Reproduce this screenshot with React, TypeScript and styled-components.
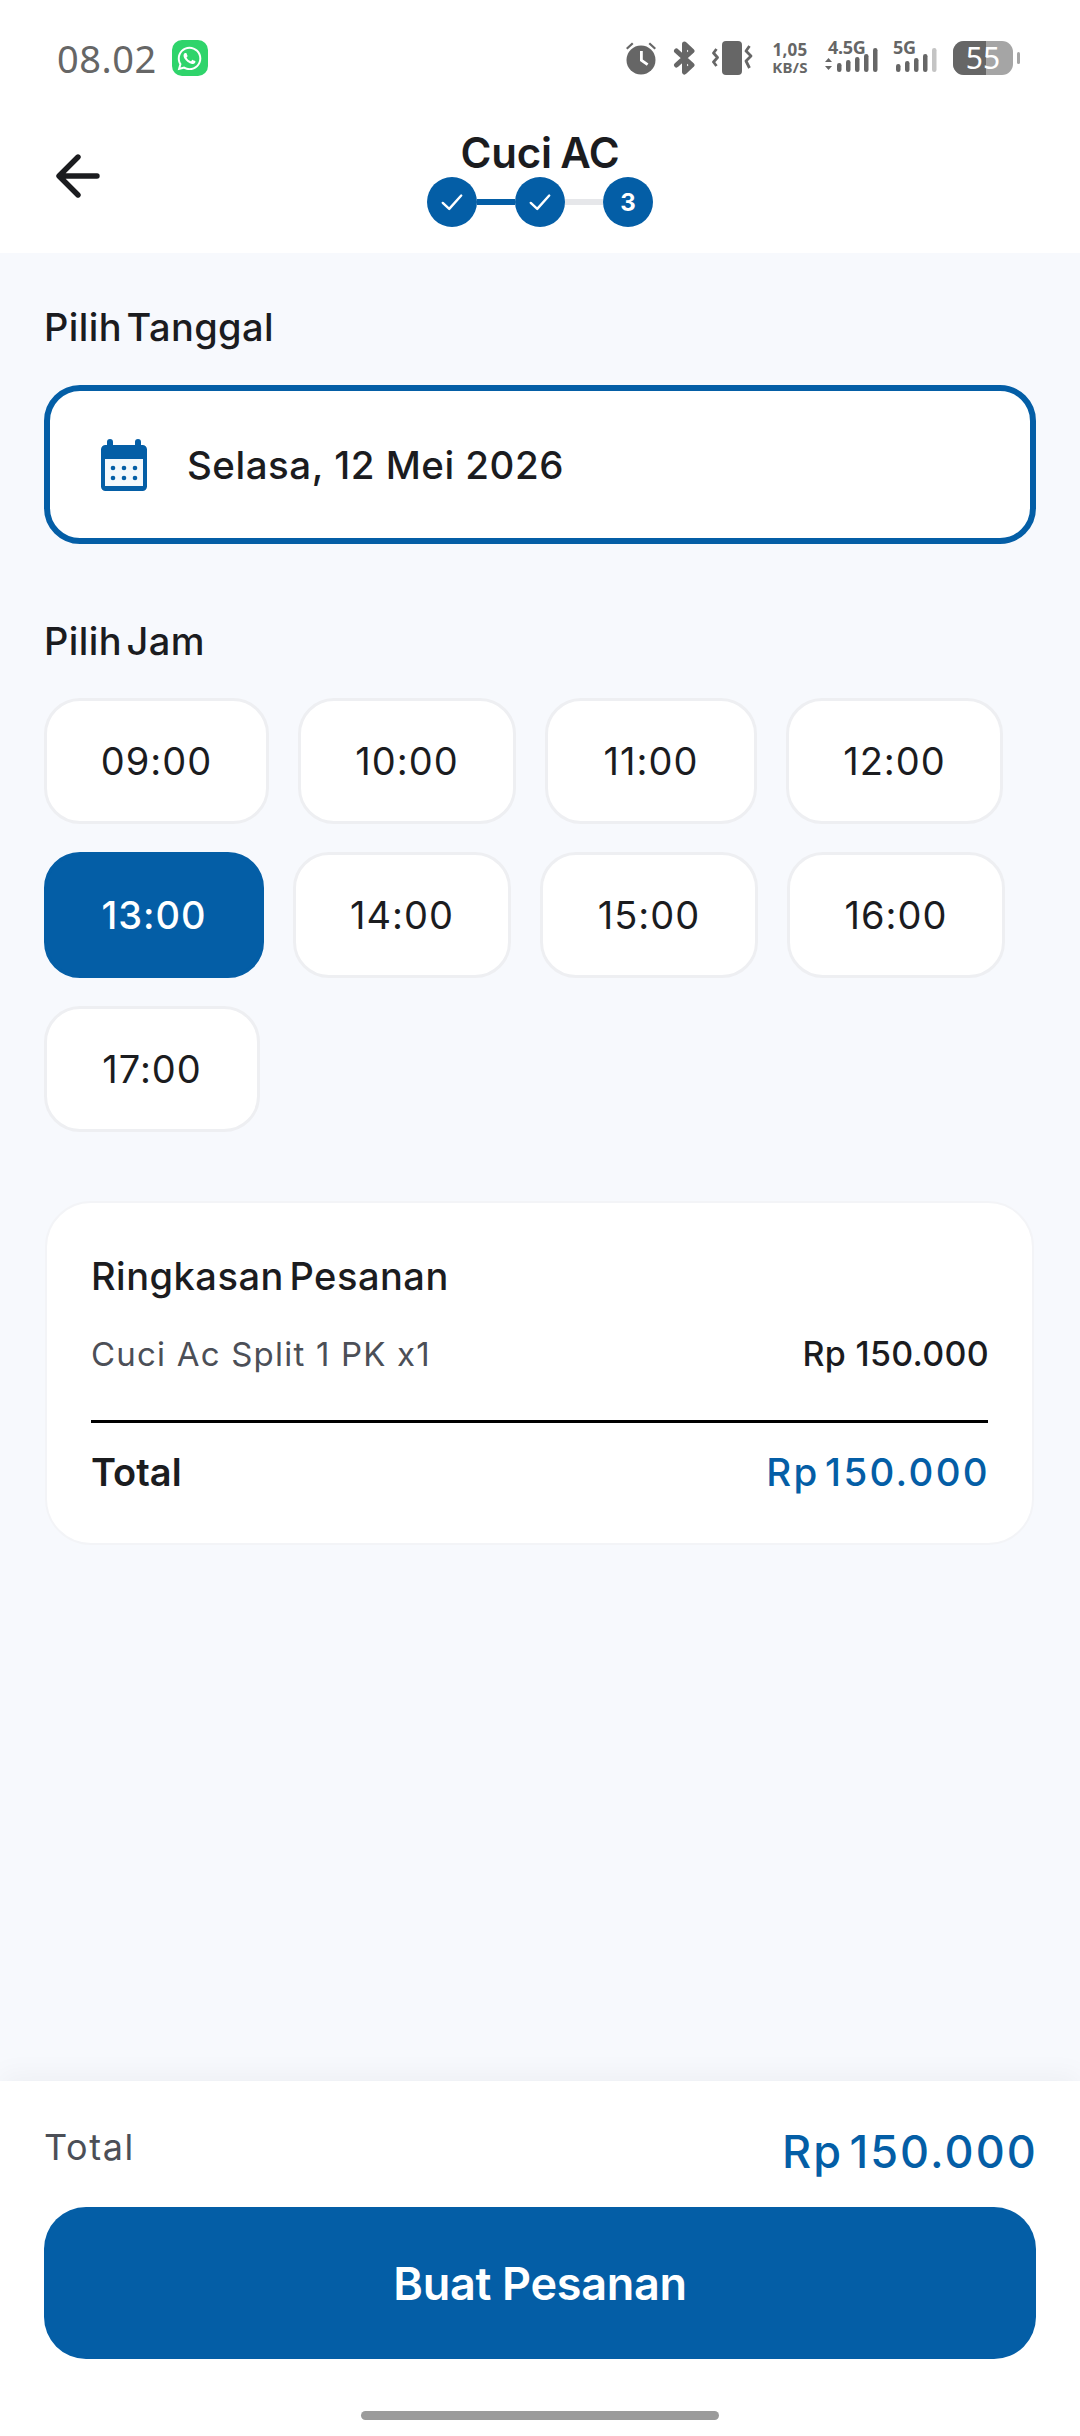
import React from "react";
import styled, { createGlobalStyle } from "styled-components";
import { FaWhatsapp } from "react-icons/fa";

const BLUE = "#045ea6";
const INK = "#1b1c1f";
const GREY = "#666666";

const Global = createGlobalStyle`
  html, body { margin: 0; padding: 0; background: #f7f9fd; }
  * { box-sizing: border-box; }
  body { font-family: Inter, "Noto Sans", sans-serif; color: ${INK}; }
`;

const Page = styled.div`
  width: 1080px;
  height: 2436px;
  display: flex;
  flex-direction: column;
  background: #f7f9fd;
  overflow: hidden;
`;

const StatusBar = styled.div`
  height: 110px;
  padding: 40px 60px 0 57px;
  background: #fff;
  display: flex;
  align-items: flex-start;
  justify-content: space-between;
`;

const StatusLeft = styled.div`
  display: flex;
  align-items: center;
  gap: 15px;
  height: 36px;
`;

const Clock = styled.span`
  font-family: "Noto Sans", sans-serif;
  font-size: 38px;
  line-height: 36px;
  color: ${GREY};
  letter-spacing: 0.5px;
`;

const WaBadge = styled.span`
  width: 36px;
  height: 36px;
  border-radius: 10px;
  background: #2fd46b;
  color: #fff;
  display: flex;
  align-items: center;
  justify-content: center;
`;

const StatusRight = styled.div`
  display: flex;
  align-items: center;
  height: 36px;
`;

const Slot = styled.span<{ $gap: number }>`
  display: flex;
  margin-right: ${(p) => p.$gap}px;
`;

const Speed = styled.span`
  display: flex;
  flex-direction: column;
  align-items: center;
  width: 40px;
  margin-right: 15px;
  font-family: "Noto Sans", sans-serif;
  font-weight: 700;
  color: ${GREY};
  font-size: 15px;
  line-height: 16px;
  letter-spacing: 0.3px;
`;

const SpeedTop = styled.span`
  font-size: 17px;
  line-height: 18px;
`;

const NetBlock = styled.span<{ $w: number; $gap: number }>`
  position: relative;
  display: block;
  width: ${(p) => p.$w}px;
  height: 36px;
  margin-right: ${(p) => p.$gap}px;
`;

const NetLabel = styled.span<{ $left: number }>`
  position: absolute;
  left: ${(p) => p.$left}px;
  top: -2px;
  font-family: "Noto Sans", sans-serif;
  font-weight: 700;
  font-size: 18px;
  line-height: 18px;
  color: ${GREY};
  letter-spacing: -0.3px;
`;

const Battery = styled.span`
  position: relative;
  width: 60px;
  height: 34px;
  border-radius: 11px;
  display: flex;
  background: #a5a5a5;
`;

const BatteryFill = styled.span`
  width: 33px;
  border-radius: 11px 0 0 11px;
  background: #666;
`;

const BatteryText = styled.span`
  position: absolute;
  inset: 0;
  display: flex;
  align-items: center;
  justify-content: center;
  color: #fff;
  font-family: "Noto Sans", sans-serif;
  font-size: 30px;
  line-height: 34px;
`;

const BatteryNub = styled.span`
  width: 3px;
  height: 12px;
  margin-left: 4px;
  border-radius: 2px;
  background: #a5a5a5;
`;

const Header = styled.header`
  height: 143px;
  padding: 19px 56px 26px;
  background: #fff;
  display: grid;
  grid-template-columns: 1fr auto 1fr;
  align-items: center;
`;

const BackButton = styled.span`
  display: flex;
  width: 44px;
  height: 44px;
  margin-bottom: 4px;
`;

const HeaderCenter = styled.div`
  display: flex;
  flex-direction: column;
  align-items: center;
`;

const Title = styled.h1`
  margin: 0;
  font-size: 42px;
  line-height: 48px;
  font-weight: 600;
  letter-spacing: -0.2px;
  word-spacing: -2px;
  color: ${INK};
`;

const Stepper = styled.div`
  display: flex;
  align-items: center;
  height: 50px;
`;

const StepDot = styled.span`
  width: 50px;
  height: 50px;
  border-radius: 50%;
  background: ${BLUE};
  color: #fff;
  font-size: 24px;
  font-weight: 700;
  display: flex;
  align-items: center;
  justify-content: center;
`;

const StepLine = styled.span<{ $done?: boolean }>`
  width: 38px;
  height: 6px;
  background: ${(p) => (p.$done ? BLUE : "#e6e7ea")};
`;

const Main = styled.main`
  flex: 1;
  padding: 50px 44px 0;
  display: flex;
  flex-direction: column;
`;

const Label = styled.h2`
  margin: 0;
  font-size: 38px;
  line-height: 48px;
  font-weight: 500;
  letter-spacing: 0.4px;
  word-spacing: -6px;
  color: ${INK};
`;

const DateField = styled.div`
  margin: 34px 0 73px;
  height: 159px;
  border: 6px solid ${BLUE};
  border-radius: 36px;
  background: #fff;
  padding: 0 51px;
  display: flex;
  align-items: center;
  gap: 40px;
  font-size: 38.5px;
  font-weight: 500;
  letter-spacing: 0.5px;
`;

const Chips = styled.div`
  margin-top: 33px;
  display: flex;
  flex-wrap: wrap;
  column-gap: 29px;
  row-gap: 28px;
`;

const Chip = styled.div<{ $w: number; $active?: boolean }>`
  width: ${(p) => p.$w}px;
  height: 126px;
  border-radius: 36px;
  border: 3px solid ${(p) => (p.$active ? BLUE : "#eeeff2")};
  background: ${(p) => (p.$active ? BLUE : "#fff")};
  color: ${(p) => (p.$active ? "#fff" : INK)};
  font-size: 38px;
  letter-spacing: 1px;
  font-weight: ${(p) => (p.$active ? 500 : 400)};
  display: flex;
  align-items: center;
  justify-content: center;
`;

const SummaryCard = styled.section`
  margin: 69px 2px 0 1px;
  height: 344px;
  padding: 49px 44px 0 44px;
  background: #fff;
  border: 2px solid #f3f4f7;
  border-radius: 46px;
  display: flex;
  flex-direction: column;
`;

const CardTitle = styled.h3`
  margin: 0;
  font-size: 38px;
  line-height: 48px;
  font-weight: 500;
  letter-spacing: 0.5px;
  word-spacing: -5px;
  color: ${INK};
`;

const Row = styled.div`
  display: flex;
  justify-content: space-between;
  align-items: center;
`;

const ItemRow = styled(Row)`
  margin-top: 30px;
  padding-bottom: 42px;
  border-bottom: 3px solid #000;
  line-height: 48px;
`;

const ItemName = styled.span`
  font-size: 33px;
  letter-spacing: 1.2px;
  color: #4c4f57;
`;

const ItemPrice = styled.span`
  font-size: 34px;
  font-weight: 500;
  letter-spacing: 0.3px;
  margin-right: -1px;
  color: ${INK};
`;

const TotalRow = styled(Row)`
  margin-top: 25px;
  line-height: 48px;
`;

const TotalLabel = styled.span`
  font-size: 38px;
  font-weight: 600;
  letter-spacing: 0;
  color: ${INK};
`;

const TotalPrice = styled.span`
  font-size: 38.5px;
  font-weight: 500;
  letter-spacing: 2.3px;
  word-spacing: -7px;
  margin-right: -2px;
  color: ${BLUE};
`;

const BottomBar = styled.footer`
  height: 355px;
  background: #fff;
  box-shadow: 0 -6px 26px rgba(0, 0, 0, 0.045);
  padding: 40px 44px 0;
  display: flex;
  flex-direction: column;
  align-items: stretch;
`;

const BarTotalRow = styled(Row)`
  height: 60px;
`;

const BarLabel = styled.span`
  font-size: 36px;
  letter-spacing: 1.6px;
  color: #4c4f57;
  margin-bottom: 8px;
`;

const BarPrice = styled.span`
  font-size: 45px;
  font-weight: 500;
  letter-spacing: 2.1px;
  word-spacing: -8px;
  margin-right: -2px;
  color: ${BLUE};
`;

const PrimaryButton = styled.button`
  margin-top: 26px;
  height: 152px;
  border: none;
  border-radius: 42px;
  background: ${BLUE};
  color: #fff;
  font-family: Inter, sans-serif;
  font-size: 45px;
  font-weight: 600;
  letter-spacing: -0.3px;
`;

const HomeBar = styled.div`
  width: 358px;
  height: 9px;
  border-radius: 5px;
  background: #9b9b9b;
  margin: 52px auto 0;
`;

const CheckIcon = () => (
  <svg width="24" height="24" viewBox="0 0 26 26" fill="none" stroke="#fff" strokeWidth="2.6" strokeLinecap="round" strokeLinejoin="round">
    <path d="M3 14l7 6.5L23 6" />
  </svg>
);

const ArrowBack = () => (
  <svg width="44" height="44" viewBox="0 0 44 44" fill="none" stroke={INK} strokeWidth="5.4" strokeLinecap="round" strokeLinejoin="round">
    <path d="M41 22H4M22 3L3 22 22 41" />
  </svg>
);

const CalendarIcon = () => (
  <svg width="46" height="52" viewBox="0 0 46 52" fill={BLUE}>
    <path d="M9 0a3 3 0 0 1 3 3v3h22V3a3 3 0 0 1 6 0v3h1.5A4.5 4.5 0 0 1 46 10.5v37a4.5 4.5 0 0 1-4.5 4.5h-37A4.5 4.5 0 0 1 0 47.5v-37A4.5 4.5 0 0 1 4.500 6H6V3a3 3 0 0 1 3-3z" />
    <rect x="4" y="20" width="38" height="27" fill="#f3f8fc" />
    <g>
      <circle cx="12" cy="29" r="2.300" />
      <circle cx="23" cy="29" r="2.300" />
      <circle cx="34" cy="29" r="2.300" />
      <circle cx="12" cy="39" r="2.300" />
      <circle cx="23" cy="39" r="2.300" />
      <circle cx="34" cy="39" r="2.300" />
    </g>
  </svg>
);

const AlarmIcon = () => (
  <svg width="32" height="36" viewBox="0 0 32 36" fill={GREY}>
    <circle cx="16" cy="20" r="14.500" />
    <path d="M15 11h2.800v8.500l5.600 4-1.600 2.200-6.800-4.800z" fill="#fff" />
    <path d="M1 8l6-5.500 1.500 1.600-6 5.500zM31 8l-6-5.500-1.500 1.600 6 5.500z" />
  </svg>
);

const BluetoothIcon = () => (
  <svg width="23" height="34" viewBox="0 0 23 34" fill="none" stroke={GREY} strokeWidth="5" strokeLinejoin="round" strokeLinecap="round">
    <path d="M3.500 10l15.500 14-7.500 7V3L19 10 3.500 24" />
  </svg>
);

const VibrateIcon = () => (
  <svg width="42" height="34" viewBox="0 0 42 34" fill="none" stroke={GREY} strokeWidth="2.800" strokeLinejoin="round">
    <rect x="10" y="0" width="20" height="34" rx="4" fill={GREY} stroke="none" />
    <path d="M4.500 8L1.500 12l4 4.500-4 4.500 3 4" />
    <path d="M37.500 5l-3.500 5 5 5-5 5 3.500 7" />
  </svg>
);

const MobileSignal = () => (
  <svg width="53" height="36" viewBox="0 0 53 36" fill={GREY}>
    <path d="M0 22l3.500-4 3.500 4zM0 26h7l-3.500 4z" />
    <rect x="12" y="23" width="4.500" height="9" rx="2.200" />
    <rect x="21" y="20" width="4.500" height="12" rx="2.200" />
    <rect x="30" y="17" width="4.500" height="15" rx="2.200" />
    <rect x="39" y="14" width="4.500" height="18" rx="2.200" />
    <rect x="48" y="8" width="4.500" height="24" rx="2.200" />
  </svg>
);

const FiveGSignal = () => (
  <svg width="44" height="36" viewBox="0 0 44 36" fill={GREY}>
    <rect x="3" y="24" width="4.500" height="8" rx="2.200" />
    <rect x="12" y="21" width="4.500" height="11" rx="2.200" />
    <rect x="21" y="18" width="4.500" height="14" rx="2.200" />
    <rect x="30" y="14" width="4.500" height="18" rx="2.200" />
    <rect x="39" y="8" width="4.500" height="24" rx="2.200" fill="#c4c4c4" />
  </svg>
);

const slots: { t: string; w: number; active?: boolean }[] = [
  { t: "09:00", w: 225 },
  { t: "10:00", w: 218 },
  { t: "11:00", w: 212 },
  { t: "12:00", w: 217 },
  { t: "13:00", w: 220, active: true },
  { t: "14:00", w: 218 },
  { t: "15:00", w: 218 },
  { t: "16:00", w: 218 },
  { t: "17:00", w: 216 },
];

export default function App() {
  return (
    <Page>
      <Global />
      <StatusBar>
        <StatusLeft>
          <Clock>08.02</Clock>
          <WaBadge>
            <FaWhatsapp size={27} />
          </WaBadge>
        </StatusLeft>
        <StatusRight>
          <Slot $gap={16}><AlarmIcon /></Slot>
          <Slot $gap={16}><BluetoothIcon /></Slot>
          <Slot $gap={16}><VibrateIcon /></Slot>
          <Speed>
            <SpeedTop>1,05</SpeedTop>
            KB/S
          </Speed>
          <NetBlock $w={53} $gap={15}>
            <NetLabel $left={3}>4.5G</NetLabel>
            <MobileSignal />
          </NetBlock>
          <NetBlock $w={44} $gap={16}>
            <NetLabel $left={0}>5G</NetLabel>
            <FiveGSignal />
          </NetBlock>
          <Battery>
            <BatteryFill />
            <BatteryText>55</BatteryText>
          </Battery>
          <BatteryNub />
        </StatusRight>
      </StatusBar>
      <Header>
        <BackButton>
          <ArrowBack />
        </BackButton>
        <HeaderCenter>
          <Title>Cuci AC</Title>
          <Stepper>
            <StepDot><CheckIcon /></StepDot>
            <StepLine $done />
            <StepDot><CheckIcon /></StepDot>
            <StepLine />
            <StepDot>3</StepDot>
          </Stepper>
        </HeaderCenter>
      </Header>
      <Main>
        <Label>Pilih Tanggal</Label>
        <DateField>
          <CalendarIcon />
          Selasa, 12 Mei 2026
        </DateField>
        <Label>Pilih Jam</Label>
        <Chips>
          {slots.map((s) => (
            <Chip key={s.t} $w={s.w} $active={s.active}>{s.t}</Chip>
          ))}
        </Chips>
        <SummaryCard>
          <CardTitle>Ringkasan Pesanan</CardTitle>
          <ItemRow>
            <ItemName>Cuci Ac Split 1 PK x1</ItemName>
            <ItemPrice>Rp 150.000</ItemPrice>
          </ItemRow>
          <TotalRow>
            <TotalLabel>Total</TotalLabel>
            <TotalPrice>Rp 150.000</TotalPrice>
          </TotalRow>
        </SummaryCard>
      </Main>
      <BottomBar>
        <BarTotalRow>
          <BarLabel>Total</BarLabel>
          <BarPrice>Rp 150.000</BarPrice>
        </BarTotalRow>
        <PrimaryButton>Buat Pesanan</PrimaryButton>
        <HomeBar />
      </BottomBar>
    </Page>
  );
}
